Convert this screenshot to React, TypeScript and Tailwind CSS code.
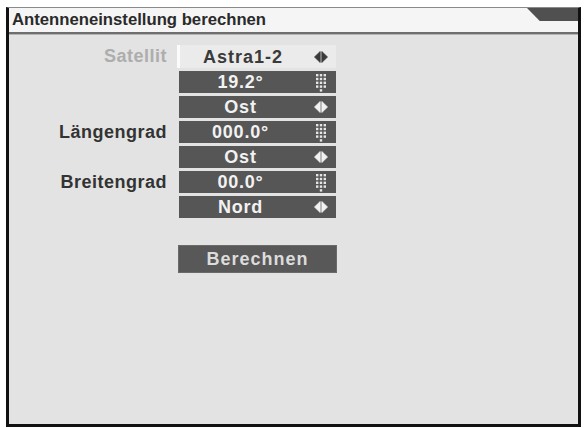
import React from "react";

const font = { fontFamily: '"Liberation Sans", Arial, sans-serif' };

function ArrowsIcon({ light }: { light: boolean }) {
  const c = light ? "#f2f2f2" : "#3a3a3a";
  return (
    <svg width="14" height="12" viewBox="0 0 14 12">
      <polygon points="6.2,0.5 6.2,11.5 0.5,6" fill={c} stroke={c} strokeWidth="0.8" strokeLinejoin="round" />
      <polygon points="7.8,0.5 7.8,11.5 13.5,6" fill={c} stroke={c} strokeWidth="0.8" strokeLinejoin="round" />
    </svg>
  );
}

function KeypadIcon() {
  const xs = [1, 4.8, 8.6];
  const ys = [1, 4.8, 8.6, 12.4];
  return (
    <svg width="12" height="19" viewBox="0 0 12 19">
      {ys.map((y) =>
        xs.map((x) => (
          <rect key={`${x}-${y}`} x={x} y={y} width="2.4" height="2.4" fill="#e6e6e6" />
        ))
      )}
      <rect x="4.8" y="16.2" width="2.4" height="2.4" fill="#e6e6e6" />
    </svg>
  );
}

type Row = { label?: string; value: string; icon: "arrows" | "keypad" };

const rows: Row[] = [
  { value: "19.2°", icon: "keypad" },
  { value: "Ost", icon: "arrows" },
  { label: "Längengrad", value: "000.0°", icon: "keypad" },
  { value: "Ost", icon: "arrows" },
  { label: "Breitengrad", value: "00.0°", icon: "keypad" },
  { value: "Nord", icon: "arrows" },
];

export default function App() {
  return (
    <div className="w-[584px] h-[428px] bg-white pt-[7px] pl-[6px] pr-[3px] pb-[1px]" style={font}>
      <div className="h-full flex flex-col border-t border-t-[#8a8a8a] border-l-[3px] border-r-[3px] border-b-[3px] border-l-[#111] border-r-[#111] border-b-[#111] bg-[#e3e3e3]">
        {/* title bar */}
        <div className="relative h-[24px] bg-[#f5f5f5] flex items-center pl-[3px]">
          <span className="text-[16.7px] font-bold text-[#2a2a2a] leading-none pt-[1px]">
            Antenneneinstellung berechnen
          </span>
          <div className="absolute right-0 top-0 w-[51px] h-[13px] bg-[#505050] [clip-path:polygon(0_0,100%_0,100%_100%,25%_100%)]" />
        </div>
        <div className="h-[2px] bg-[#6e6e6e]" />
        <div className="h-[1px] bg-[#b4b4b4]" />

        {/* settings */}
        <div className="pt-[10px] grid grid-cols-[158px_160px] gap-x-[10px]">
          <div className="h-[23px] flex items-center justify-end text-[18px] font-bold tracking-[0.5px] text-[#adadad]">
            Satellit
          </div>
          <div className="h-[23px] flex items-center bg-[#ebebeb] border-l-[3px] border-l-[#fbfbfb] w-[159px]">
            <div className="flex-1 text-center text-[18px] font-bold tracking-[1px] text-[#3a3a3a] leading-none">
              Astra1-2
            </div>
            <div className="w-[30px] flex justify-center">
              <ArrowsIcon light={false} />
            </div>
          </div>

          {rows.map((r, i) => (
            <React.Fragment key={i}>
              <div className="mt-[3px] h-[22px] flex items-center justify-end text-[18px] font-bold tracking-[0.5px] text-[#333]">
                {r.label ?? ""}
              </div>
              <div className="mt-[3px] h-[22px] ml-[2px] w-[157px] flex items-center bg-[#565656]">
                <div className="flex-1 pr-[4px] text-center text-[18px] font-bold tracking-[0.8px] text-[#f2f2f2] leading-none">
                  {r.value}
                </div>
                <div className="w-[30px] flex justify-center">
                  {r.icon === "arrows" ? <ArrowsIcon light /> : <KeypadIcon />}
                </div>
              </div>
            </React.Fragment>
          ))}

          <div />
          <div className="mt-[27px] ml-[1px] w-[159px] h-[28px] flex items-center justify-center bg-[#585858] border border-[#6a6a6a]">
            <span className="text-[18px] font-bold tracking-[1px] text-[#dcdcdc] leading-none">Berechnen</span>
          </div>
        </div>
      </div>
    </div>
  );
}
